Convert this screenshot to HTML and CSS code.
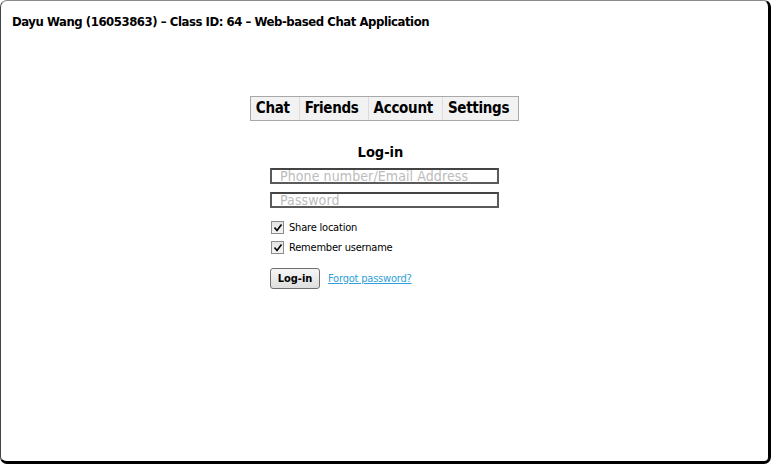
FILE: index.html
```html
<!DOCTYPE html>
<html>
<head>
<meta charset="utf-8">
<link rel="stylesheet" href="styles.css">
</head>
<body>
<div class="window">
  <div class="title">Dayu Wang (16053863) – Class ID: 64 – Web-based Chat Application</div>
  <div class="main">
    <nav class="nav">
      <span class="nav-item">Chat</span>
      <span class="nav-item">Friends</span>
      <span class="nav-item">Account</span>
      <span class="nav-item">Settings</span>
    </nav>
    <div class="login">
      <h2 class="login-title">Log-in</h2>
      <div class="field"><span class="placeholder">Phone number/Email Address</span></div>
      <div class="field"><span class="placeholder">Password</span></div>
      <div class="checks">
        <label class="check"><span class="box"><svg width="10" height="10" viewBox="0 0 10 10"><path d="M1.5 4.5 L4 7.5 L8.5 1.5" fill="none" stroke="#000" stroke-width="1.6"/></svg></span>Share location</label>
        <label class="check"><span class="box"><svg width="10" height="10" viewBox="0 0 10 10"><path d="M1.5 4.5 L4 7.5 L8.5 1.5" fill="none" stroke="#000" stroke-width="1.6"/></svg></span>Remember username</label>
      </div>
      <div class="actions">
        <button class="btn">Log-in</button>
        <a class="link" href="#">Forgot password?</a>
      </div>
    </div>
  </div>
</div>
</body>
</html>
```
FILE: styles.css
```css
html, body { margin: 0; padding: 0; background: #fff; }
body { font-family: "DejaVu Sans Condensed", "DejaVu Sans", sans-serif; color: #000; }
.window {
  box-sizing: border-box;
  width: 771px;
  height: 464px;
  border-top: 1px solid #8a8a8a;
  border-left: 1px solid #444;
  border-right: 3px solid #000;
  border-bottom: 3px solid #000;
  border-radius: 7px;
  background: #fff;
  display: flex;
  flex-direction: column;
}
.title {
  padding: 13px 0 0 11px;
  font-size: 13px;
  font-weight: bold;
  line-height: 16px;
  letter-spacing: -0.45px;
}
.main {
  display: flex;
  flex-direction: column;
  align-items: center;
  padding-top: 66px;
}
.nav {
  display: flex;
  border: 1px solid #a8a8a8;
  background: #f2f2f2;
  height: 23px;
  align-items: stretch;
}
.nav-item {
  font-size: 15px;
  font-weight: bold;
  line-height: 23px;
  letter-spacing: -0.3px;
  padding: 0 9px 0 5px;
  border-left: 1px solid #dcdcdc;
}
.nav-item:first-child { border-left: none; }
.login {
  width: 229px;
  display: flex;
  flex-direction: column;
}
.login-title {
  margin: 22px 0 0 0;
  text-align: center;
  font-size: 14.5px;
  font-weight: bold;
  line-height: 19px;
  padding-right: 8px;
}
.field {
  height: 12px;
  border: 2px solid #5a5a5a;
  border-top-color: #444;
  margin-top: 6px;
  overflow: hidden;
}
.field + .field { margin-top: 8px; }
.placeholder {
  display: block;
  font-size: 14px;
  line-height: 12px;
  color: #bcbcbc;
  padding-left: 8px;
  letter-spacing: 0.1px;
}
.checks {
  display: flex;
  flex-direction: column;
  gap: 7px;
  margin-top: 13px;
}
.check {
  display: flex;
  align-items: center;
  gap: 5px;
  font-size: 11px;
  line-height: 13px;
  padding-left: 1px;
  letter-spacing: -0.2px;
}
.box {
  width: 11px;
  height: 11px;
  border: 1px solid #8c8c8c;
  background: linear-gradient(#e4e4e4, #f4f4f4);
  display: flex;
  align-items: center;
  justify-content: center;
}
.actions {
  display: flex;
  align-items: center;
  gap: 8px;
  margin-top: 14px;
}
.btn {
  font-family: "DejaVu Sans Condensed", "DejaVu Sans", sans-serif;
  font-size: 11px;
  font-weight: bold;
  height: 21px;
  width: 50px;
  padding: 0;
  border: 1px solid #6f6f6f;
  border-radius: 3px;
  background: linear-gradient(#f6f6f6, #dedede);
  color: #000;
}
.link {
  font-size: 11px;
  color: #2e9fd8;
  text-decoration: underline;
  letter-spacing: -0.2px;
}
```
